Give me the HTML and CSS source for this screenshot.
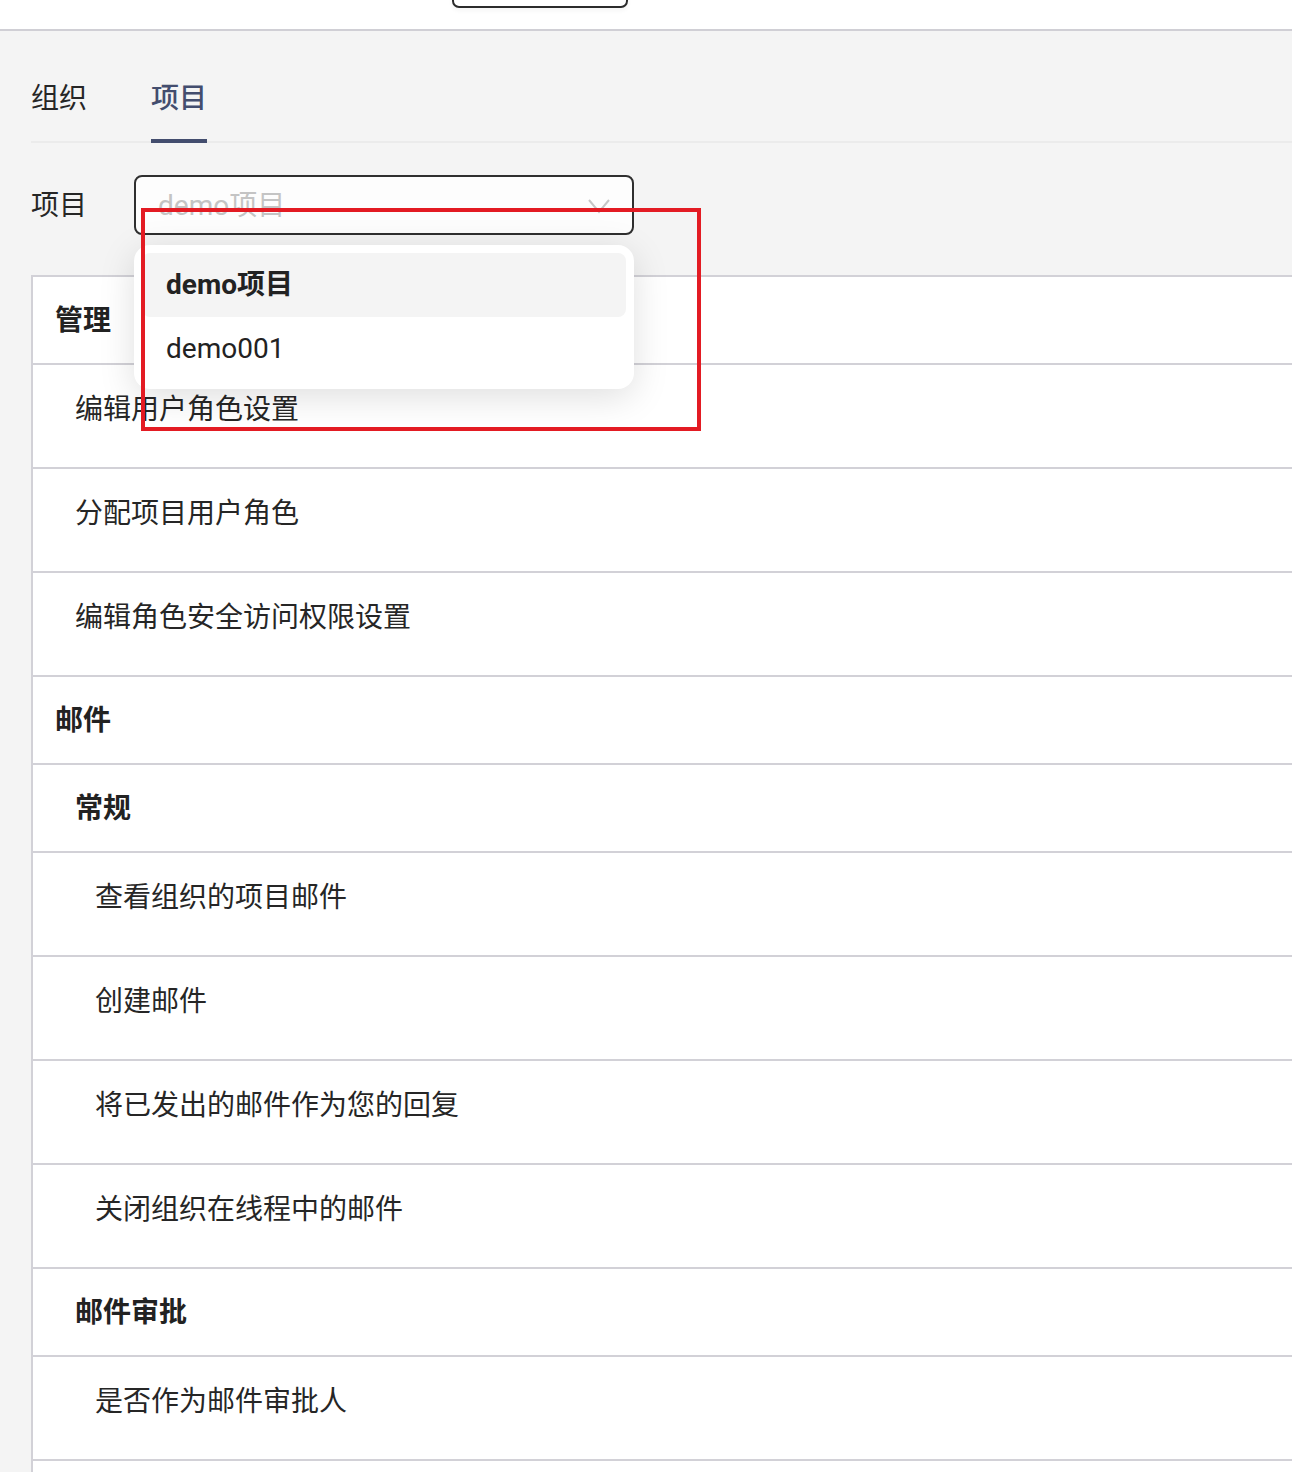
FILE: index.html
```html
<!DOCTYPE html>
<html lang="zh-CN">
<head>
<meta charset="utf-8">
<title>权限设置</title>
<link rel="stylesheet" href="styles.css">
</head>
<body>
<header class="topbar">
  <button class="top-btn" type="button"></button>
</header>

<main class="main">
  <nav class="tabs">
    <div class="tab">组织</div>
    <div class="tab active">项目</div>
  </nav>

  <div class="form-row">
    <label class="form-label">项目</label>
    <div class="select-wrap">
      <div class="select">
        <span class="placeholder">demo项目</span>
        <svg class="chevron" width="22" height="15" viewBox="0 0 22 15"><path d="M1 1 L11 13 L21 1" fill="none" stroke="#c6c6c6" stroke-width="2"/></svg>
      </div>
      <div class="dropdown">
        <div class="option selected">demo项目</div>
        <div class="option">demo001</div>
      </div>
    </div>
  </div>

  <section class="perm-table">
    <div class="row head l1">管理</div>
    <div class="row l2">编辑用户角色设置</div>
    <div class="row l2">分配项目用户角色</div>
    <div class="row l2">编辑角色安全访问权限设置</div>
    <div class="row head l1">邮件</div>
    <div class="row head l2">常规</div>
    <div class="row l3">查看组织的项目邮件</div>
    <div class="row l3">创建邮件</div>
    <div class="row l3">将已发出的邮件作为您的回复</div>
    <div class="row l3">关闭组织在线程中的邮件</div>
    <div class="row head l2">邮件审批</div>
    <div class="row l3">是否作为邮件审批人</div>
    <div class="row l3">&nbsp;</div>
  </section>
</main>

<div class="highlight-box"></div>
</body>
</html>
```

FILE: styles.css
```css
* { box-sizing: border-box; }

html, body {
  margin: 0;
  padding: 0;
}

body {
  background: #f4f4f4;
  font-family: Roboto, "Noto Sans CJK SC", sans-serif;
  font-size: 28px;
  color: #262626;
  overflow: hidden;
  position: relative;
}

.topbar {
  height: 31px;
  background: #ffffff;
  border-bottom: 2px solid #d0cfd5;
  padding-left: 452px;
  display: flex;
  align-items: flex-start;
}

.top-btn {
  width: 176px;
  height: 40px;
  margin-top: -32px;
  border: 2px solid #2c2c2c;
  border-radius: 7px;
  background: #ffffff;
  box-shadow: 0 3px 4px rgba(0, 0, 0, 0.04);
  padding: 0;
}

.main {
  padding-left: 31px;
}

.tabs {
  display: flex;
  gap: 64px;
  padding-top: 48px;
  border-bottom: 2px solid #ebebeb;
}

.tab {
  line-height: 40px;
  padding-bottom: 20px;
  margin-bottom: -2px;
  border-bottom: 4px solid transparent;
  color: #262626;
}

.tab.active {
  color: #434d6e;
  font-weight: 500;
  border-bottom-color: #434d6e;
}

.form-row {
  display: flex;
  align-items: center;
  margin-top: 32px;
}

.form-label {
  width: 103px;
  line-height: 40px;
  padding-top: 2px;
  color: #262626;
}

.select-wrap {
  position: relative;
  width: 500px;
}

.select {
  height: 60px;
  border: 2px solid #2f2f2f;
  border-radius: 8px;
  background: #fdfdfd;
  display: flex;
  align-items: center;
  justify-content: space-between;
  padding: 0 22px 0 22px;
}

.placeholder {
  color: #c4c4c4;
  line-height: 40px;
  padding-top: 2px;
}

.chevron {
  display: block;
  margin-top: 2px;
}

.dropdown {
  position: absolute;
  top: calc(100% + 10px);
  left: 0;
  width: 100%;
  background: #ffffff;
  border-radius: 16px;
  padding: 8px;
  box-shadow: 0 8px 36px rgba(0, 0, 0, 0.13);
  z-index: 5;
}

.option {
  height: 64px;
  line-height: 64px;
  padding-left: 24px;
  border-radius: 8px;
  color: #222222;
}

.option.selected {
  background: #f4f4f4;
  font-weight: 700;
}

.perm-table {
  margin-top: 40px;
  background: #ffffff;
  border-top: 2px solid #d2d1d7;
  border-left: 2px solid #d2d1d7;
}

.row {
  line-height: 40px;
  padding-top: 25px;
  padding-bottom: 37px;
  border-bottom: 2px solid #d2d1d7;
  color: #262626;
}

.row.head {
  padding-top: 24px;
  padding-bottom: 22px;
  font-weight: 700;
  color: #222222;
}

.l1 { padding-left: 22px; }
.l2 { padding-left: 42px; }
.l3 { padding-left: 62px; }

.highlight-box {
  position: absolute;
  top: 208px;
  left: 141px;
  width: 560px;
  height: 223px;
  border: 4px solid #e31b23;
  z-index: 10;
  pointer-events: none;
}
```
